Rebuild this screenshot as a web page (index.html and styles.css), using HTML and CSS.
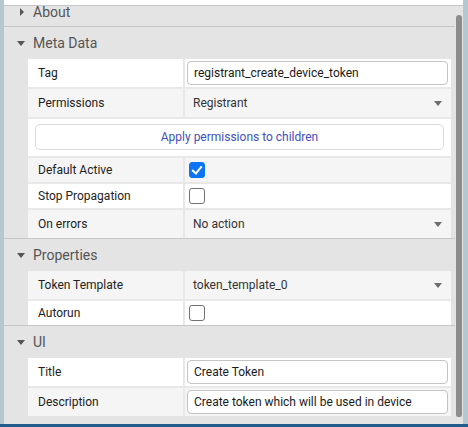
FILE: index.html
```html
<!DOCTYPE html>
<html>
<head>
<meta charset="utf-8">
<link rel="stylesheet" href="styles.css">
</head>
<body>
<div class="app">
  <div class="side side-l"></div>
  <div class="panel">
    <div class="topbar"></div>
    <div class="scroll">
      <div class="content">
        <section class="sec sec-about">
          <div class="sec-head"><span class="tri tri-right"></span><span class="sec-title">About</span></div>
        </section>
        <section class="sec">
          <div class="sec-head"><span class="tri tri-down"></span><span class="sec-title">Meta Data</span></div>
          <div class="rows">
            <div class="cell label white">Tag</div>
            <div class="cell value white"><div class="input">registrant_create_device_token</div></div>
            <div class="cell label grey">Permissions</div>
            <div class="cell value grey select"><span class="sel-text">Registrant</span><span class="caret"></span></div>
            <div class="cell span white btn-row"><div class="btn">Apply permissions to children</div></div>
            <div class="cell label grey chk-row">Default Active</div>
            <div class="cell value grey chk-row"><span class="chk checked"></span></div>
            <div class="cell label white chk-row">Stop Propagation</div>
            <div class="cell value white chk-row"><span class="chk"></span></div>
            <div class="cell label grey">On errors</div>
            <div class="cell value grey select"><span class="sel-text">No action</span><span class="caret"></span></div>
          </div>
        </section>
        <section class="sec">
          <div class="sec-head"><span class="tri tri-down"></span><span class="sec-title">Properties</span></div>
          <div class="rows">
            <div class="cell label grey">Token Template</div>
            <div class="cell value grey select"><span class="sel-text">token_template_0</span><span class="caret"></span></div>
            <div class="cell label white chk-row">Autorun</div>
            <div class="cell value white chk-row"><span class="chk"></span></div>
          </div>
        </section>
        <section class="sec sec-last">
          <div class="sec-head"><span class="tri tri-down"></span><span class="sec-title">UI</span></div>
          <div class="rows">
            <div class="cell label white">Title</div>
            <div class="cell value white"><div class="input">Create Token</div></div>
            <div class="cell label grey">Description</div>
            <div class="cell value grey"><div class="input">Create token which will be used in device</div></div>
          </div>
        </section>
      </div>
      <div class="scrollbar"><div class="thumb"></div></div>
    </div>
  </div>
  <div class="side side-r"></div>
</div>
<div class="footer"></div>
</body>
</html>
```

FILE: styles.css
```css
* { box-sizing: border-box; }
html, body { margin: 0; padding: 0; }
body {
  width: 468px;
  height: 427px;
  overflow: hidden;
  font-family: Roboto, "Liberation Sans", Arial, sans-serif;
  font-size: 12px;
  color: #222;
  background: #b7c7cf;
}
.app {
  display: flex;
  height: 424px;
}
.side { background: #b7c7cf; }
.side-l { width: 4px; }
.side-r { width: 5px; }
.panel {
  flex: 1;
  display: flex;
  flex-direction: column;
  min-width: 0;
}
.topbar {
  height: 6px;
  background: #fff;
  border-bottom: 1px solid #c6c6c6;
}
.scroll {
  flex: 1;
  display: flex;
  background: #e4e4e4;
}
.content {
  flex: 1;
  min-width: 0;
}
.sec { border-bottom: 1px solid #c6c6c6; }
.sec-last { border-bottom: none; }
.sec-head {
  height: 32px;
  display: flex;
  align-items: center;
  font-size: 14px;
  color: #555;
}
.sec-about .sec-head {
  height: 20px;
  padding-bottom: 8px;
}
.sec-about .sec-title { line-height: 12px; }
.tri {
  width: 29px;
  display: flex;
  justify-content: center;
  align-items: center;
}
.tri-right::before {
  content: "";
  border-left: 4px solid #555;
  border-top: 4px solid transparent;
  border-bottom: 4px solid transparent;
  margin-left: 6px;
}
.tri-down::before {
  content: "";
  border-top: 5px solid #555;
  border-left: 4.5px solid transparent;
  border-right: 4.5px solid transparent;
  margin-left: 4px;
}
.rows {
  margin: 0 4px 0 24px;
  display: grid;
  grid-template-columns: 155px 1fr;
  gap: 2px;
  background: #e8e8e8;
}
.cell {
  height: 28px;
  display: flex;
  align-items: center;
}
.white { background: #fff; }
.grey { background: #f5f5f5; }
.label { padding-left: 10px; color: #222; }
.value { padding: 0 3px 0 2px; }
.chk-row { height: 24px; }
.span { grid-column: 1 / span 2; }
.btn-row {
  height: 37px;
  padding: 5px 7px 6px 7px;
}
.btn {
  flex: 1;
  height: 26px;
  border: 1px solid #dcdcdc;
  border-radius: 5px;
  background: #fff;
  color: #3f4fc0;
  display: flex;
  align-items: center;
  justify-content: center;
}
.input {
  flex: 1;
  height: 24px;
  border: 1px solid #c4c4c4;
  border-radius: 4px;
  background: #fff;
  padding-left: 6px;
  display: flex;
  align-items: center;
  color: #1a1a1a;
  white-space: nowrap;
  overflow: hidden;
}
.select {
  padding: 0 9px 0 8px;
  justify-content: space-between;
  color: #333;
}
.caret {
  border-top: 5px solid #6d6d6d;
  border-left: 4.5px solid transparent;
  border-right: 4.5px solid transparent;
}
.chk {
  width: 16px;
  height: 16px;
  margin-left: 2px;
  border: 1.5px solid #727272;
  border-radius: 3px;
  background: #fff;
  position: relative;
}
.chk.checked {
  background: #0b75f5;
  border-color: #0b75f5;
}
.chk.checked::after {
  content: "";
  position: absolute;
  left: 4px;
  top: 0.5px;
  width: 4px;
  height: 8px;
  border-right: 2.5px solid #fff;
  border-bottom: 2.5px solid #fff;
  transform: rotate(40deg);
}
.scrollbar {
  width: 8px;
  padding: 9px 1px 7px 1px;
  display: flex;
}
.thumb {
  flex: 1;
  background: #8c8c8c;
  border-radius: 4px 4px 3px 3px;
}
.footer {
  height: 3px;
  background: #215c8d;
}
```
